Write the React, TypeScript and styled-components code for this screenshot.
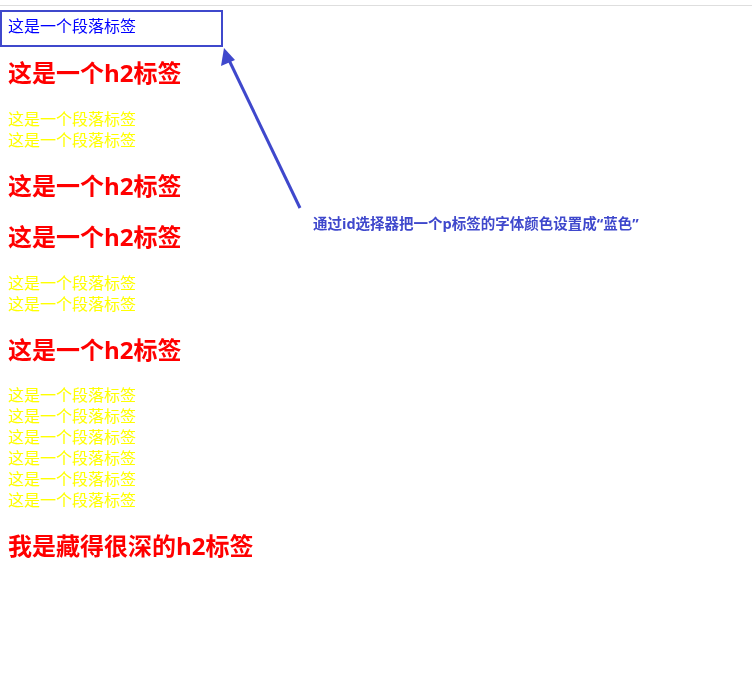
import React from 'react';
import styled, { createGlobalStyle } from 'styled-components';

const GlobalStyle = createGlobalStyle`
  body {
    margin: 0;
    background: #fff;
    font-family: "Open Sans", "Noto Sans CJK SC", sans-serif;
  }
`;

const Page = styled.div`
  position: relative;
  display: flow-root;
  padding: 16px 8px 0;
`;

const Para = styled.p<{ $color: string; $first?: boolean }>`
  margin: ${(p) => (p.$first ? '0 0 20px' : '16px 0')};
  font-size: 16px;
  line-height: 21px;
  color: ${(p) => p.$color};
`;

const Line = styled.div`
  line-height: 21px;
`;

const Title = styled.h2`
  margin: 19px 0 19.92px;
  font-size: 24px;
  line-height: 31.68px;
  font-weight: bold;
  color: #ff0000;
`;

const Rule = styled.div`
  position: fixed;
  top: 5px;
  left: 0;
  right: 0;
  height: 1px;
  background: #dedede;
`;

const Marker = styled.div`
  position: absolute;
  left: 0;
  top: 10px;
  width: 219px;
  height: 33px;
  border: 2px solid #3f48cc;
`;

const Arrow = styled.svg`
  position: absolute;
  left: 0;
  top: 0;
  overflow: visible;
`;

const Note = styled.div`
  position: absolute;
  left: 313px;
  top: 214px;
  font-size: 14.5px;
  line-height: 20px;
  font-weight: bold;
  color: #3f48cc;
  white-space: nowrap;
`;

const yellow = '#ffff00';

export default function App() {
  return (
    <>
      <GlobalStyle />
      <Rule />
      <Page>
        <Para $color="#0000ff" $first>这是一个段落标签</Para>
        <Title>这是一个h2标签</Title>
        <Para $color={yellow}>
          <Line>这是一个段落标签</Line>
          <Line>这是一个段落标签</Line>
        </Para>
        <Title>这是一个h2标签</Title>
        <Title>这是一个h2标签</Title>
        <Para $color={yellow}>
          <Line>这是一个段落标签</Line>
          <Line>这是一个段落标签</Line>
        </Para>
        <Title>这是一个h2标签</Title>
        <Para $color={yellow}>
          <Line>这是一个段落标签</Line>
          <Line>这是一个段落标签</Line>
          <Line>这是一个段落标签</Line>
          <Line>这是一个段落标签</Line>
          <Line>这是一个段落标签</Line>
          <Line>这是一个段落标签</Line>
        </Para>
        <Title>我是藏得很深的h2标签</Title>

        <Marker />
        <Arrow width="1" height="1">
          <line x1="300" y1="208" x2="228" y2="58" stroke="#3f48cc" strokeWidth="3" />
          <polygon points="224,48 221,66 235,60" fill="#3f48cc" />
        </Arrow>
        <Note>通过id选择器把一个p标签的字体颜色设置成“蓝色”</Note>
      </Page>
    </>
  );
}
